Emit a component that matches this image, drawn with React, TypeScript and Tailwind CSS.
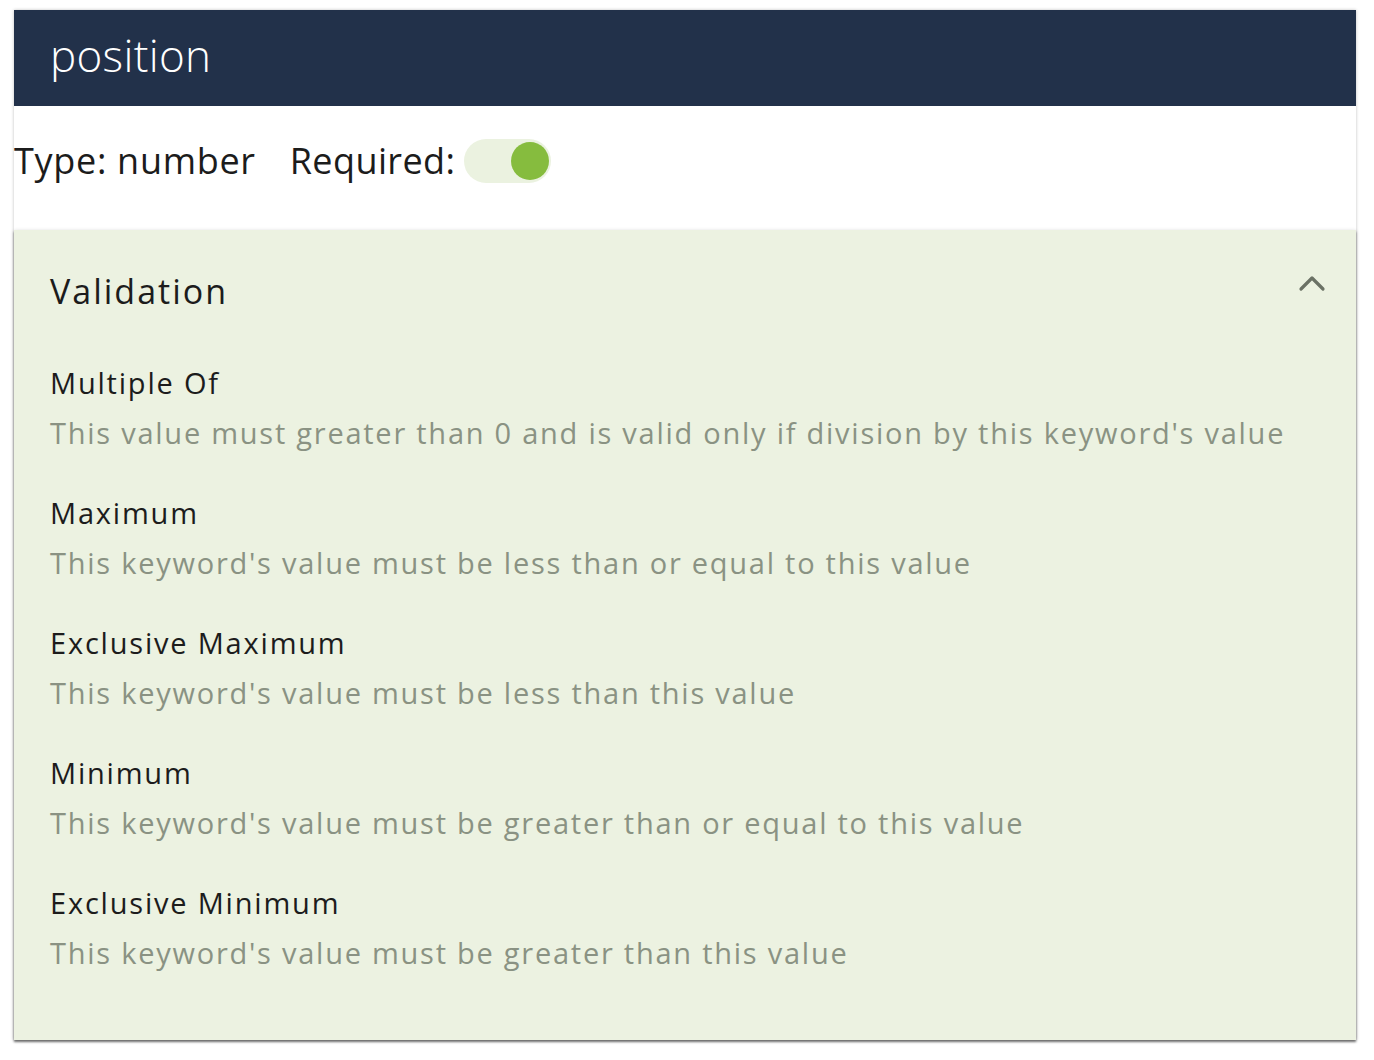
import React from "react";

const items = [
  ["Multiple Of", "This value must greater than 0 and is valid only if division by this keyword's value"],
  ["Maximum", "This keyword's value must be less than or equal to this value"],
  ["Exclusive Maximum", "This keyword's value must be less than this value"],
  ["Minimum", "This keyword's value must be greater than or equal to this value"],
  ["Exclusive Minimum", "This keyword's value must be greater than this value"],
];

export default function App() {
  return (
    <div className="w-[1374px] h-[1060px] bg-white pt-[10px] pl-[14px] pr-[18px]" style={{ fontFamily: "'Open Sans', sans-serif" }}>
      <div className="bg-white shadow-[0_0_3px_rgba(0,0,0,0.25)]">
        <div className="h-[96px] bg-[#22314a] flex items-center pl-[36px] pb-[6px]">
          <span className="text-white text-[44px] font-light leading-none tracking-[0.3px]">position</span>
        </div>
        <div className="h-[124px] flex items-center gap-[34px] pb-[14px]">
          <span className="text-[36px] text-[#1c1c1c] tracking-[0.7px]">Type: number</span>
          <div className="flex items-center gap-[9px]">
            <span className="text-[36px] text-[#1c1c1c] tracking-[0.4px]">Required:</span>
            <div className="w-[87px] h-[44px] rounded-full bg-[#ebf2e0] flex items-center justify-end pr-[2px]">
              <div className="w-[38px] h-[38px] rounded-full bg-[#86bc3e]" />
            </div>
          </div>
        </div>
        <div className="bg-[#ecf2e1] h-[810px] shadow-[0_2px_2px_rgba(0,0,0,0.45),0_1px_4px_rgba(0,0,0,0.2)] pl-[36px] pr-[30px] pt-[36px]">
          <div className="flex items-center justify-between">
            <span className="text-[34px] text-[#1c1c1c] tracking-[2px]">Validation</span>
            <svg width="28" height="18" viewBox="0 0 28 18" className="mb-[17px]">
              <path d="M3 15 L14 4 L25 15" fill="none" stroke="#6b7265" strokeWidth="3.2" strokeLinecap="round" strokeLinejoin="round" />
            </svg>
          </div>
          <div className="mt-[45px] flex flex-col gap-[33px]">
            {items.map(([t, d]) => (
              <div key={t} className="flex flex-col">
                <span className="text-[29px] leading-[42px] text-[#1c1c1c] tracking-[1.8px]">{t}</span>
                <span className="mt-[3px] text-[29px] leading-[52px] text-[#8a9283] tracking-[1.75px]">{d}</span>
              </div>
            ))}
          </div>
        </div>
      </div>
    </div>
  );
}
